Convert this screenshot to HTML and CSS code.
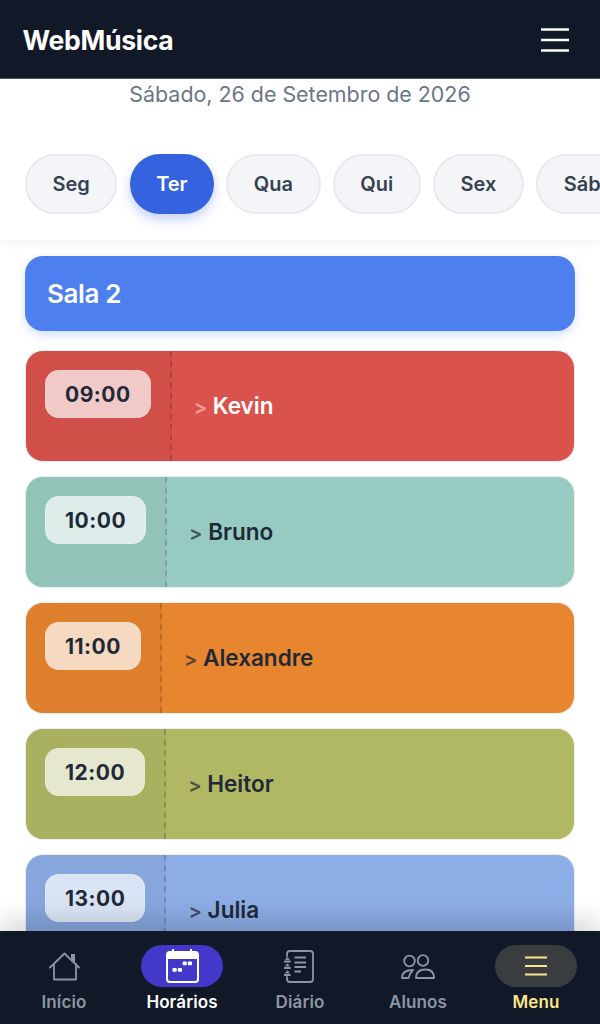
FILE: index.html
```html
<!DOCTYPE html>
<html lang="pt-BR">

<head>
    <meta charset="UTF-8">
    <meta name="viewport" content="width=device-width, initial-scale=1.0">
    <title>WebMúsica</title>
    <link rel="stylesheet" href="styles.css">
</head>

<body>
    <header class="topbar">
        <span class="brand">WebMúsica</span>
        <button class="burger" aria-label="Menu">
            <svg width="28" height="24" viewBox="0 0 28 24">
                <path d="M0 1.5H28M0 12H28M0 22.5H28" stroke="#fff" stroke-width="2.4" fill="none" />
            </svg>
        </button>
    </header>

    <main class="content">
        <section class="week-panel">
            <p class="date">Sábado, 26 de Setembro de 2026</p>
            <div class="days">
                <button class="day">Seg</button>
                <button class="day active">Ter</button>
                <button class="day">Qua</button>
                <button class="day">Qui</button>
                <button class="day">Sex</button>
                <button class="day">Sáb</button>
            </div>
        </section>

        <section class="schedule">
            <h2 class="room">Sala 2</h2>

            <article class="lesson red">
                <div class="lesson-time"><span class="time">09:00</span></div>
                <div class="lesson-name"><span class="arrow">&gt;</span> Kevin</div>
            </article>

            <article class="lesson teal">
                <div class="lesson-time"><span class="time">10:00</span></div>
                <div class="lesson-name"><span class="arrow">&gt;</span> Bruno</div>
            </article>

            <article class="lesson orange">
                <div class="lesson-time"><span class="time">11:00</span></div>
                <div class="lesson-name"><span class="arrow">&gt;</span> Alexandre</div>
            </article>

            <article class="lesson olive">
                <div class="lesson-time"><span class="time">12:00</span></div>
                <div class="lesson-name"><span class="arrow">&gt;</span> Heitor</div>
            </article>

            <article class="lesson blue">
                <div class="lesson-time"><span class="time">13:00</span></div>
                <div class="lesson-name"><span class="arrow">&gt;</span> Julia</div>
            </article>
        </section>
    </main>

    <nav class="tabbar">
        <a class="tab">
            <span class="tab-icon">
                <svg width="32" height="29" viewBox="0 0 32 29" fill="none" stroke="#8d95a3" stroke-width="1.8" stroke-linejoin="round" stroke-linecap="round">
                    <path d="M2 15.5L16.5 1.5L31 15.5" />
                    <path d="M6 12V27.5H28V12" />
                    <path d="M23 2H27V11L23 7Z" fill="#8d95a3" stroke="none" />
                </svg>
            </span>
            <span class="tab-label">Início</span>
        </a>
        <a class="tab selected">
            <span class="tab-icon pill-blue">
                <svg width="34" height="34" viewBox="0 0 34 34" fill="none">
                    <rect x="2" y="3" width="31" height="30" rx="3" stroke="#fff" stroke-width="2" />
                    <path d="M2 4H33V10H2Z" fill="#fff" />
                    <path d="M8 0V4M26 0V4" stroke="#fff" stroke-width="2" />
                    <rect x="7.5" y="19" width="4.2" height="3.8" rx="1" fill="#fff" />
                    <rect x="12.8" y="19" width="4.2" height="3.8" rx="1" fill="#fff" />
                    <rect x="17.6" y="12.5" width="4.2" height="3.8" rx="1" fill="#fff" />
                    <rect x="22.8" y="12.5" width="4.2" height="3.8" rx="1" fill="#fff" />
                </svg>
            </span>
            <span class="tab-label">Horários</span>
        </a>
        <a class="tab">
            <span class="tab-icon">
                <svg width="32" height="33" viewBox="0 0 32 33" fill="none" stroke="#8d95a3" stroke-width="1.8" stroke-linecap="round">
                    <path d="M3 6V4A3 3 0 0 1 6 1H26A3 3 0 0 1 29 4V29A3 3 0 0 1 26 32H6A3 3 0 0 1 3 29V27" />
                    <path d="M10.5 7.5H22M10.5 12.5H22M10.5 17H22M10.5 21.5H17" stroke-width="2" stroke-linecap="butt" />
                    <path d="M0.5 11.5H6M0.5 18H6M0.5 25H6" />
                    <path d="M3.2 7.5L1.5 9.5H5ZM3.2 14L1.5 16H5ZM3.2 21L1.5 23H5Z" fill="#8d95a3" stroke-width="0.8" />
                </svg>
            </span>
            <span class="tab-label">Diário</span>
        </a>
        <a class="tab">
            <span class="tab-icon">
                <svg width="34" height="25" viewBox="0 0 34 25" fill="none" stroke="#8d95a3" stroke-width="1.8" stroke-linejoin="round">
                    <circle cx="8.5" cy="7" r="5.3" />
                    <circle cx="22" cy="6.5" r="5.3" />
                    <path d="M1 24C1 19 5 16 12 16C10 18 8 21 7.5 24Z" />
                    <path d="M15 24C15 18 19 15.5 24.5 15.5C30 15.5 33 18 33 24Z" />
                </svg>
            </span>
            <span class="tab-label">Alunos</span>
        </a>
        <a class="tab menu">
            <span class="tab-icon pill-dark">
                <svg width="24" height="20" viewBox="0 0 24 20">
                    <path d="M1 1.5H23M1 10H23M1 18.5H23" stroke="#fde68a" stroke-width="2" fill="none" />
                </svg>
            </span>
            <span class="tab-label">Menu</span>
        </a>
    </nav>
</body>

</html>
```

FILE: styles.css
```css
/* General Reset */
* {
    margin: 0;
    padding: 0;
    box-sizing: border-box;
}

:root {
    --dark-bg: #111827;
    --text-dark: #1f2937;
    --muted: #6b7689;
    --nav-muted: #8d95a3;
}

html,
body {
    height: 100%;
}

body {
    display: flex;
    flex-direction: column;
    overflow: hidden;
    font-family: Inter, "Liberation Sans", sans-serif;
    background-color: #fff;
    color: var(--text-dark);
}

button {
    font-family: inherit;
    border: none;
    background: none;
}

.topbar {
    flex: none;
    height: 79px;
    display: flex;
    align-items: center;
    justify-content: space-between;
    padding: 2px 31px 0 22.5px;
    background-color: var(--dark-bg);
    border-bottom: 1px solid #4b5563;
}

.brand {
    font-size: 26.6px;
    font-weight: 700;
    letter-spacing: -0.3px;
    color: #fff;
}

.burger {
    display: flex;
}

.content {
    flex: 1;
    min-height: 0;
    overflow: hidden;
}

.week-panel {
    height: 161px;
    box-shadow: 0 4px 10px rgba(0, 0, 0, 0.04);
}

.date {
    padding-top: 2px;
    text-align: center;
    font-size: 21.4px;
    line-height: 26px;
    color: var(--muted);
}

.days {
    display: flex;
    gap: 12.3px;
    margin-top: 47px;
    padding: 0 0 16px 25px;
    overflow: hidden;
}

.day {
    flex: none;
    height: 60px;
    padding: 0 25.5px;
    font-size: 20px;
    font-weight: 600;
    color: #374151;
    background-color: #f3f5f9;
    border: 2px solid #e8eaee;
    border-radius: 30px;
}

.day.active {
    padding: 0 26.5px;
    color: #fff;
    background-color: #3563e0;
    border: none;
    box-shadow: 0 5px 12px rgba(53, 99, 224, 0.3);
}

.schedule {
    display: flex;
    flex-direction: column;
    gap: 14px;
    padding: 16px 25px 0;
}

.room {
    height: 75px;
    margin-bottom: 5px;
    display: flex;
    align-items: center;
    padding-left: 22px;
    font-size: 26px;
    font-weight: 600;
    letter-spacing: -0.4px;
    color: #fff;
    background-color: #4d80ee;
    border-radius: 18px;
    box-shadow: 0 4px 10px rgba(77, 128, 238, 0.25);
}

.lesson {
    flex: none;
    height: 112px;
    display: flex;
    overflow: hidden;
    border: 1px solid #eceef1;
    border-radius: 18px;
}

.lesson-time {
    flex: none;
    padding: 19px 19px 0;
    background-color: rgba(0, 0, 0, 0.04);
    border-right: 2px dashed rgba(0, 0, 0, 0.16);
}

.time {
    display: block;
    padding: 0 19px;
    height: 48px;
    line-height: 48px;
    font-size: 21px;
    font-weight: 700;
    letter-spacing: 0.5px;
    color: var(--text-dark);
    background-color: rgba(255, 255, 255, 0.7);
    border: 1px solid rgba(255, 255, 255, 0.12);
    border-radius: 14px;
}

.lesson-name {
    padding: 37px 0 0 22px;
    font-size: 22.5px;
    line-height: 36px;
    font-weight: 600;
}

.arrow {
    font-size: 20px;
    opacity: 0.7;
}

.red {
    background-color: #d9534c;
    color: #fff;
}

.red .arrow {
    color: #fbb;
}

.teal {
    background-color: #97cbc1;
}

.orange {
    background-color: #e8852f;
}

.olive {
    background-color: #b0b863;
}

.blue {
    background-color: #8dade6;
}

.tabbar {
    position: relative;
    flex: none;
    height: 93px;
    display: grid;
    grid-template-columns: repeat(5, 118px);
    justify-content: center;
    padding-top: 14px;
    background-color: var(--dark-bg);
    box-shadow: 0 -10px 24px rgba(0, 0, 0, 0.16);
}

.tab {
    display: flex;
    flex-direction: column;
    align-items: center;
    gap: 3px;
    color: var(--nav-muted);
}

.tab-icon {
    width: 82px;
    height: 42px;
    display: flex;
    align-items: center;
    justify-content: center;
    border-radius: 21px;
}

.pill-blue {
    background-color: #4338ca;
}

.pill-dark {
    background-color: #3a3d3f;
}

.tab-label {
    font-size: 17px;
    line-height: 24px;
    font-weight: 600;
    letter-spacing: 0.1px;
}

.selected {
    color: #fff;
}

.menu {
    color: #fde68a;
}
```
